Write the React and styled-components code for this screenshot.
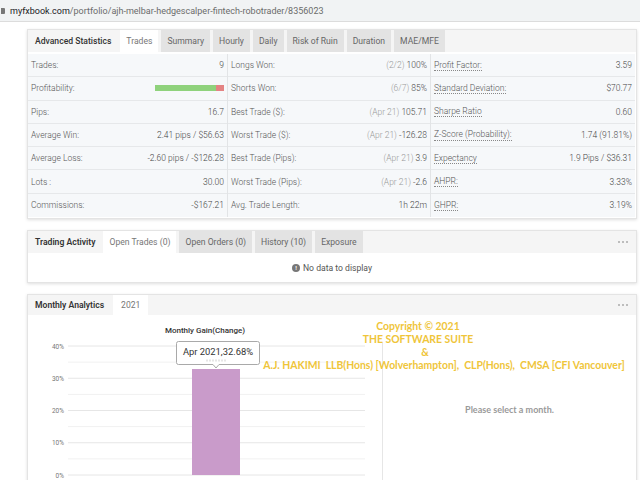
import styled, { createGlobalStyle } from 'styled-components';

const GlobalStyle = createGlobalStyle`
  html, body { margin: 0; padding: 0; background: #fff; }
  body { width: 640px; height: 480px; overflow: hidden; font-family: Roboto, "Liberation Sans", sans-serif; }
`;

const Page = styled.div`
  width: 640px;
  height: 480px;
  overflow: hidden;
  display: flex;
  flex-direction: column;
`;

const AddressBar = styled.div`
  height: 21px;
  flex-shrink: 0;
  background: #f1f3f4;
  border-bottom: 1px solid #dcdcdc;
  display: flex;
  align-items: center;
  padding-left: 1px;
  font-size: 9px;
  color: #6b6b6b;
`;

const Lock = styled.span`
  width: 4px;
  height: 6px;
  background: #777;
  border-radius: 0 1px 1px 0;
  margin-right: 5px;
`;

const Host = styled.span`
  color: #202124;
`;

const Content = styled.div`
  padding: 7px 3px 0 27px;
  display: flex;
  flex-direction: column;
  gap: 11px;
`;

const Panel = styled.div`
  position: relative;
  background: #fff;
  border: 1px solid #e4e4e4;
  box-shadow: 0 1px 3px rgba(0, 0, 0, 0.13);
  flex-shrink: 0;
`;

const PanelHeader = styled.div`
  height: ${(p) => p.$h || 22}px;
  display: flex;
  align-items: stretch;
  background: #f5f5f5;
  font-size: 8.6px;
  color: #666;
`;

const PanelTitle = styled.div`
  display: flex;
  align-items: center;
  padding: 0 ${(p) => p.$pr || 9}px 0 7px;
  font-weight: ${(p) => p.$weight || 500};
  color: #333;
`;

const Tab = styled.div`
  display: flex;
  align-items: center;
  padding: 0 ${(p) => p.$px || 6}px;
  margin-right: 3px;
  background: ${(p) => (p.$active ? '#fff' : '#e3e3e3')};
  color: ${(p) => (p.$active ? '#777' : '#666')};
`;

const Dots = styled.div`
  margin-left: auto;
  padding-right: 8px;
  display: flex;
  align-items: center;
  gap: 1.5px;
`;

const Dot = styled.span`
  width: 2.5px;
  height: 2.5px;
  border-radius: 50%;
  background: #aaa;
`;

const StatsGrid = styled.div`
  margin: 2px 1px 1px 0;
  display: grid;
  grid-template-columns: 200px 203px 1fr;
  background: #f6f8fa;
`;

const StatsCol = styled.div`
  border-right: ${(p) => (p.$last ? 'none' : '1px solid #e2e4e6')};
`;

const StatRow = styled.div`
  height: 23.3px;
  box-sizing: border-box;
  display: flex;
  align-items: center;
  justify-content: space-between;
  padding: 0 3px 0 3px;
  border-bottom: 1px solid #e6e8ea;
  font-size: 8.5px;
  font-weight: 300;
  color: #555;
  &:last-child { border-bottom: none; }
`;

const Label = styled.span`
  border-bottom: ${(p) => (p.$dotted ? '1px dotted #888' : 'none')};
  line-height: 1.2;
`;

const Value = styled.span`
  color: #444;
`;

const Muted = styled.span`
  color: #999;
`;

const ProfitBar = styled.div`
  width: 69px;
  height: 6px;
  display: flex;
`;

const BarPart = styled.div`
  background: ${(p) => p.$color};
`;

const EmptyBody = styled.div`
  height: 29px;
  display: flex;
  align-items: center;
  justify-content: center;
  gap: 3px;
  font-size: 8.6px;
  color: #555;
`;

const InfoIcon = styled.span`
  width: 8px;
  height: 8px;
  border-radius: 50%;
  background: #777;
  color: #fff;
  font-size: 6px;
  font-weight: 700;
  display: flex;
  align-items: center;
  justify-content: center;
`;

const AnalyticsBody = styled.div`
  height: 200px;
  display: flex;
`;

const ChartBox = styled.div`
  width: 354px;
  flex-shrink: 0;
`;

const MonthDetail = styled.div`
  flex: 1;
  margin-top: 27px;
  border-left: 1px solid #e6e6e6;
  display: flex;
  justify-content: center;
  padding-top: 62px;
  font-family: Lato, "Open Sans", sans-serif;
  font-weight: 700;
  font-size: 9px;
  color: #9a9a9a;
`;

const Copyright = styled.div`
  position: absolute;
  left: 234px;
  top: 25px;
  width: 364px;
  text-align: center;
  font-family: Lato, "Open Sans", sans-serif;
  font-weight: 700;
  font-size: 10.4px;
  line-height: 13px;
  color: #efc53a;
  pointer-events: none;
`;

const CopyLine = styled.div`
  padding-right: ${(p) => p.$shift || 0}px;
  white-space: pre;
`;

const left = [
  ['Trades:', <Value>9</Value>],
  ['Profitability:', <ProfitBar><BarPart $color="#8fd27c" style={{ width: '89%' }} /><BarPart $color="#e48383" style={{ width: '11%' }} /></ProfitBar>],
  ['Pips:', <Value>16.7</Value>],
  ['Average Win:', <Value>2.41 pips / $56.63</Value>],
  ['Average Loss:', <Value>-2.60 pips / -$126.28</Value>],
  ['Lots :', <Value>30.00</Value>],
  ['Commissions:', <Value>-$167.21</Value>],
];

const middle = [
  ['Longs Won:', '(2/2)', '100%'],
  ['Shorts Won:', '(6/7)', '85%'],
  ['Best Trade ($):', '(Apr 21)', '105.71'],
  ['Worst Trade ($):', '(Apr 21)', '-126.28'],
  ['Best Trade (Pips):', '(Apr 21)', '3.9'],
  ['Worst Trade (Pips):', '(Apr 21)', '-2.6'],
  ['Avg. Trade Length:', '', '1h 22m'],
];

const right = [
  ['Profit Factor:', '3.59'],
  ['Standard Deviation:', '$70.77'],
  ['Sharpe Ratio', '0.60'],
  ['Z-Score (Probability):', '1.74 (91.81%)'],
  ['Expectancy', '1.9 Pips / $36.31'],
  ['AHPR:', '3.33%'],
  ['GHPR:', '3.19%'],
];

const statTabs = ['Summary', 'Hourly', 'Daily', 'Risk of Ruin', 'Duration', 'MAE/MFE'];
const activityTabs = ['Open Orders (0)', 'History (10)', 'Exposure'];

const MoreDots = () => (
  <Dots>
    <Dot />
    <Dot />
    <Dot />
  </Dots>
);

const MonthlyChart = () => {
  const y0 = 160;
  const step = 32.25;
  const majors = [0, 1, 2, 3, 4];
  return (
    <svg width="354" height="200" style={{ display: 'block' }}>
      <text x="177" y="18" textAnchor="middle" fontSize="8" fontWeight="500" fill="#333" fontFamily="Roboto, sans-serif">
        Monthly Gain(Change)
      </text>
      {[0.5, 1.5, 2.5, 3.5].map((m) => (
        <line key={m} x1="40" x2="337" y1={y0 - m * step} y2={y0 - m * step} stroke="#f1f1f1" />
      ))}
      {majors.map((m) => (
        <g key={m}>
          <line x1="40" x2="337" y1={y0 - m * step} y2={y0 - m * step} stroke="#e6e6e6" />
          <text x="36" y={y0 - m * step + 2.5} textAnchor="end" fontSize="6.5" fill="#777" fontFamily="Roboto, sans-serif">
            {m * 10}%
          </text>
        </g>
      ))}
      <rect x="164" y="54" width="48" height="106" fill="#c99bca" />
      <path
        d="M150.5 26.5 H229.5 a2 2 0 0 1 2 2 V47.5 a2 2 0 0 1 -2 2 H191 L188 53 L185 49.5 H150.5 a2 2 0 0 1 -2 -2 V28.5 a2 2 0 0 1 2 -2 Z"
        fill="#fff"
        fillOpacity="0.92"
        stroke="#a9a9a9"
      />
      <line x1="178" x2="198" y1="45.5" y2="45.5" stroke="#e6e6e6" strokeWidth="2" strokeDasharray="2 1" />
      <text x="190" y="40" textAnchor="middle" fontSize="9.4" fill="#333" fontFamily="Roboto, sans-serif">
        Apr 2021,32.68%
      </text>
    </svg>
  );
};

const App = () => {
  return (
    <Page>
      <GlobalStyle />
      <AddressBar>
        <Lock />
        <Host>myfxbook.com</Host>/portfolio/ajh-melbar-hedgescalper-fintech-robotrader/8356023
      </AddressBar>

      <Content>
        <Panel>
          <PanelHeader>
            <PanelTitle>Advanced Statistics</PanelTitle>
            <Tab $active>Trades</Tab>
            {statTabs.map((t) => (
              <Tab key={t} $px={6}>{t}</Tab>
            ))}
          </PanelHeader>
          <StatsGrid>
            <StatsCol>
              {left.map(([l, v]) => (
                <StatRow key={l}>
                  <Label>{l}</Label>
                  {v}
                </StatRow>
              ))}
            </StatsCol>
            <StatsCol>
              {middle.map(([l, m, v]) => (
                <StatRow key={l}>
                  <Label>{l}</Label>
                  <Value>
                    {m && <Muted>{m} </Muted>}
                    {v}
                  </Value>
                </StatRow>
              ))}
            </StatsCol>
            <StatsCol $last>
              {right.map(([l, v]) => (
                <StatRow key={l}>
                  <Label $dotted>{l}</Label>
                  <Value>{v}</Value>
                </StatRow>
              ))}
            </StatsCol>
          </StatsGrid>
        </Panel>

        <Panel>
          <PanelHeader>
            <PanelTitle $weight={600} $pr={8}>Trading Activity</PanelTitle>
            <Tab $active $px={6}>Open Trades (0)</Tab>
            {activityTabs.map((t) => (
              <Tab key={t} $px={6}>{t}</Tab>
            ))}
            <MoreDots />
          </PanelHeader>
          <EmptyBody>
            <InfoIcon>!</InfoIcon>
            No data to display
          </EmptyBody>
        </Panel>

        <Panel>
          <PanelHeader $h={20}>
            <PanelTitle $weight={600} $pr={9}>Monthly Analytics</PanelTitle>
            <Tab $active $px={8}>2021</Tab>
            <MoreDots />
          </PanelHeader>
          <AnalyticsBody>
            <ChartBox>
              <MonthlyChart />
            </ChartBox>
            <MonthDetail>Please select a month.</MonthDetail>
          </AnalyticsBody>
          <Copyright>
            <CopyLine $shift={52}>Copyright © 2021</CopyLine>
            <CopyLine $shift={52}>THE SOFTWARE SUITE</CopyLine>
            <CopyLine $shift={38}>&amp;</CopyLine>
            <CopyLine>{'A.J. HAKIMI  LLB(Hons) [Wolverhampton],  CLP(Hons),  CMSA [CFI Vancouver]'}</CopyLine>
          </Copyright>
        </Panel>
      </Content>
    </Page>
  );
};

export default App;
